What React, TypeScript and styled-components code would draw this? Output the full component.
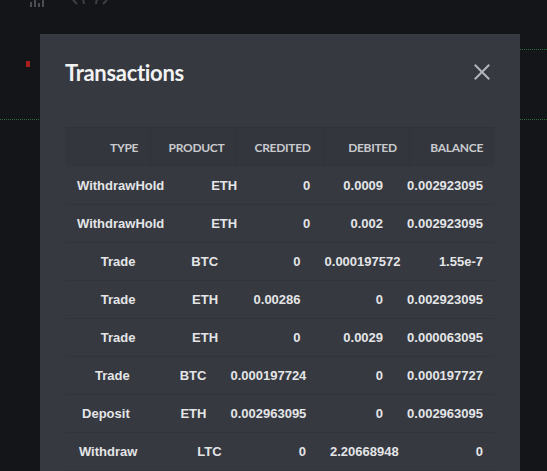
import React from "react";
import styled, { createGlobalStyle } from "styled-components";

const Global = createGlobalStyle`
  html, body { margin: 0; padding: 0; background: #131519; overflow: hidden; }
  body { width: 547px; height: 471px; }
`;

const Page = styled.div`
  position: relative;
  width: 547px;
  height: 471px;
  overflow: hidden;
  background: #131519;
`;

const ToolIcon = styled.svg<{ $left: number }>`
  position: absolute;
  top: -9px;
  left: ${(p) => p.$left}px;
`;

const DashLine = styled.div<{ $top: number; $left: number; $width: number }>`
  position: absolute;
  top: ${(p) => p.$top}px;
  left: ${(p) => p.$left}px;
  width: ${(p) => p.$width}px;
  border-top: 1px dotted #2f6b3a;
`;

const Marker = styled.div`
  position: absolute;
  top: 61px;
  left: 26px;
  width: 4px;
  height: 6px;
  background: #a51f1c;
`;

const Modal = styled.div`
  position: absolute;
  top: 34px;
  left: 40px;
  width: 480px;
  height: 460px;
  box-sizing: border-box;
  background: #363940;
  padding: 22px 25px 0 25px;
  display: flex;
  flex-direction: column;
`;

const ModalHeader = styled.div`
  display: flex;
  align-items: center;
  justify-content: space-between;
  height: 32px;
`;

const Title = styled.h2`
  margin: 0;
  font-family: Lato, "Open Sans", sans-serif;
  font-weight: 700;
  font-size: 22px;
  color: #f2f2f2;
  letter-spacing: -0.3px;
`;

const CloseButton = styled.button`
  border: none;
  background: none;
  padding: 0;
  width: 18px;
  height: 18px;
  margin-right: 4px;
  display: flex;
  align-items: center;
  justify-content: center;
  cursor: pointer;
`;

const Table = styled.div`
  margin-top: 39px;
  display: flex;
  flex-direction: column;
`;

const HeadRow = styled.div`
  display: flex;
  height: 39px;
  align-items: stretch;
  background: #33363d;
  border-top: 1px solid #2f3238;
`;

const HeadCell = styled.div`
  flex: 1 1 0;
  padding: 0 12px;
  display: flex;
  align-items: center;
  justify-content: flex-end;
  font-family: Lato, "Open Sans", sans-serif;
  font-weight: 700;
  font-size: 12px;
  color: #c9cacd;
  letter-spacing: -0.3px;
  white-space: nowrap;
  & + & { border-left: 1px solid #2f3238; }
`;

const Row = styled.div`
  display: flex;
  height: 38px;
  align-items: center;
  border-bottom: 1px solid #31343a;
  box-sizing: border-box;
`;

const Cell = styled.div`
  flex: 1 1 0;
  padding: 0 12px;
  text-align: right;
  font-family: "Liberation Sans", Arial, sans-serif;
  font-weight: 700;
  font-size: 13px;
  color: #e4e5e7;
  white-space: nowrap;
`;

const headers = ["TYPE", "PRODUCT", "CREDITED", "DEBITED", "BALANCE"];

const rows: string[][] = [
  ["WithdrawHold", "ETH", "0", "0.0009", "0.002923095"],
  ["WithdrawHold", "ETH", "0", "0.002", "0.002923095"],
  ["Trade", "BTC", "0", "0.000197572", "1.55e-7"],
  ["Trade", "ETH", "0.00286", "0", "0.002923095"],
  ["Trade", "ETH", "0", "0.0029", "0.000063095"],
  ["Trade", "BTC", "0.000197724", "0", "0.000197727"],
  ["Deposit", "ETH", "0.002963095", "0", "0.002963095"],
  ["Withdraw", "LTC", "0", "2.20668948", "0"],
];

export default function App() {
  return (
    <>
      <Global />
      <Page>
        <ToolIcon $left={29} width="18" height="16" viewBox="0 0 18 16">
          <g fill="#4a4d53">
            <rect x="1" y="11" width="2" height="5" />
            <rect x="5" y="9" width="2" height="7" />
            <rect x="9" y="12" width="2" height="4" />
            <rect x="13" y="8" width="2" height="8" />
          </g>
        </ToolIcon>
        <ToolIcon $left={70} width="16" height="16" viewBox="0 0 16 16">
          <path d="M3 9 L7 13 M3 9 L8 6 Q13 4 14 13" stroke="#3c3f45" strokeWidth="2" fill="none" />
        </ToolIcon>
        <ToolIcon $left={94} width="16" height="16" viewBox="0 0 16 16">
          <path d="M13 9 L9 13 M13 9 L8 6 Q3 4 2 13" stroke="#3c3f45" strokeWidth="2" fill="none" />
        </ToolIcon>
        <Marker />
        <DashLine $top={49} $left={497} $width={50} />
        <DashLine $top={119} $left={0} $width={547} />
        <Modal>
          <ModalHeader>
            <Title>Transactions</Title>
            <CloseButton aria-label="Close">
              <svg width="16" height="16" viewBox="0 0 16 16">
                <path d="M1.5 1.5 L14.5 14.5 M14.5 1.5 L1.5 14.5" stroke="#b3b5b9" strokeWidth="2" strokeLinecap="square" />
              </svg>
            </CloseButton>
          </ModalHeader>
          <Table>
            <HeadRow>
              {headers.map((h) => (
                <HeadCell key={h}>{h}</HeadCell>
              ))}
            </HeadRow>
            {rows.map((r, i) => (
              <Row key={i}>
                {r.map((c, j) => (
                  <Cell key={j}>{c}</Cell>
                ))}
              </Row>
            ))}
          </Table>
        </Modal>
      </Page>
    </>
  );
}
